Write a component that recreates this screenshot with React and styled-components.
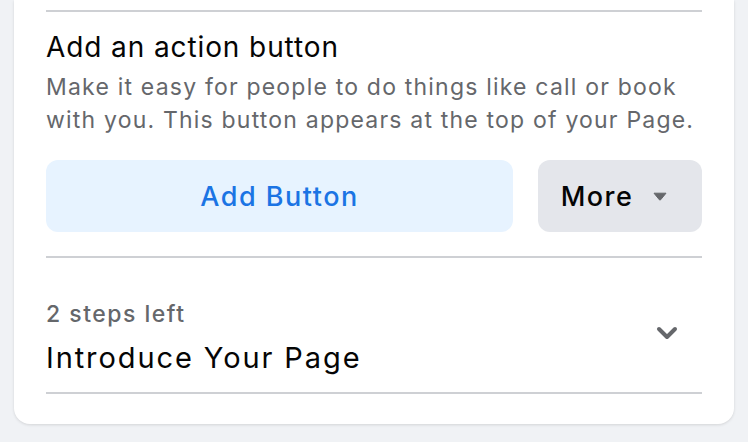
import React from 'react';
import styled, { createGlobalStyle } from 'styled-components';

const GlobalStyle = createGlobalStyle`
  body {
    margin: 0;
    background-color: #f0f2f5;
    font-family: Inter, Roboto, "Liberation Sans", sans-serif;
    -webkit-font-smoothing: antialiased;
  }
`;

const Page = styled.div`
  width: 748px;
  height: 442px;
  overflow: hidden;
`;

const Card = styled.div`
  margin: 0 14px;
  height: 424px;
  box-sizing: border-box;
  background-color: #fff;
  border-radius: 0 0 16px 16px;
  box-shadow: 0 1px 3px rgba(0, 0, 0, 0.12);
  padding: 10px 32px 0;
`;

const Divider = styled.div`
  height: 2px;
  background-color: #ced0d4;
`;

const Section = styled.div`
  padding: ${(p) => p.$pad};
`;

const Title = styled.h2`
  margin: 0;
  font-size: 28px;
  line-height: 34px;
  font-weight: 400;
  letter-spacing: 0.9px;
  color: #050505;
`;

const Description = styled.p`
  margin: 7px 0 0;
  font-size: 23px;
  line-height: 33px;
  letter-spacing: 1.2px;
  color: #65676b;
`;

const ButtonRow = styled.div`
  display: flex;
  gap: 25px;
  margin-top: 23px;
`;

const Button = styled.button`
  height: 72px;
  border: none;
  border-radius: 12px;
  font-family: inherit;
  font-size: 27px;
  font-weight: 500;
  letter-spacing: 1.5px;
  display: flex;
  align-items: center;
  justify-content: center;
  gap: 20px;
  cursor: pointer;
`;

const PrimaryButton = styled(Button)`
  flex: 1;
  background-color: #e7f3ff;
  color: #1b74e4;
`;

const MoreButton = styled(Button)`
  width: 164px;
  background-color: #e4e6eb;
  color: #050505;
  padding: 0 12px 0 0;
`;

const StepRow = styled.div`
  display: flex;
  align-items: center;
  justify-content: space-between;
  padding: 41px 0 16px;
`;

const StepsLeft = styled.div`
  font-size: 23px;
  line-height: 30px;
  font-weight: 500;
  letter-spacing: 1.5px;
  color: #65676b;
`;

const StepTitle = styled.div`
  margin-top: 11px;
  font-size: 29px;
  line-height: 36px;
  letter-spacing: 1.9px;
  color: #050505;
`;

const ChevronWrap = styled.div`
  margin: 0 24px 10px 0;
  display: flex;
`;

const Caret = () => (
  <svg width="14" height="9" viewBox="0 0 14 9">
    <path d="M1 1.2 L13 1.2 L7.6 7.8 Q7 8.5 6.4 7.8 Z" fill="#65676b" stroke="#65676b" strokeWidth="1" strokeLinejoin="round" />
  </svg>
);

const Chevron = () => (
  <svg width="22" height="14" viewBox="0 0 22 14">
    <path d="M3 3 L11 11 L19 3" fill="none" stroke="#65676b" strokeWidth="4" strokeLinecap="round" strokeLinejoin="round" />
  </svg>
);

export default function App() {
  return (
    <Page>
      <GlobalStyle />
      <Card>
        <Divider />
        <Section $pad="18px 0 24px">
          <Title>Add an action button</Title>
          <Description>
            Make it easy for people to do things like call or book with you. This button appears at the top of your Page.
          </Description>
          <ButtonRow>
            <PrimaryButton>Add Button</PrimaryButton>
            <MoreButton>
              More
              <Caret />
            </MoreButton>
          </ButtonRow>
        </Section>
        <Divider />
        <StepRow>
          <div>
            <StepsLeft>2 steps left</StepsLeft>
            <StepTitle>Introduce Your Page</StepTitle>
          </div>
          <ChevronWrap>
            <Chevron />
          </ChevronWrap>
        </StepRow>
        <Divider />
      </Card>
    </Page>
  );
}
